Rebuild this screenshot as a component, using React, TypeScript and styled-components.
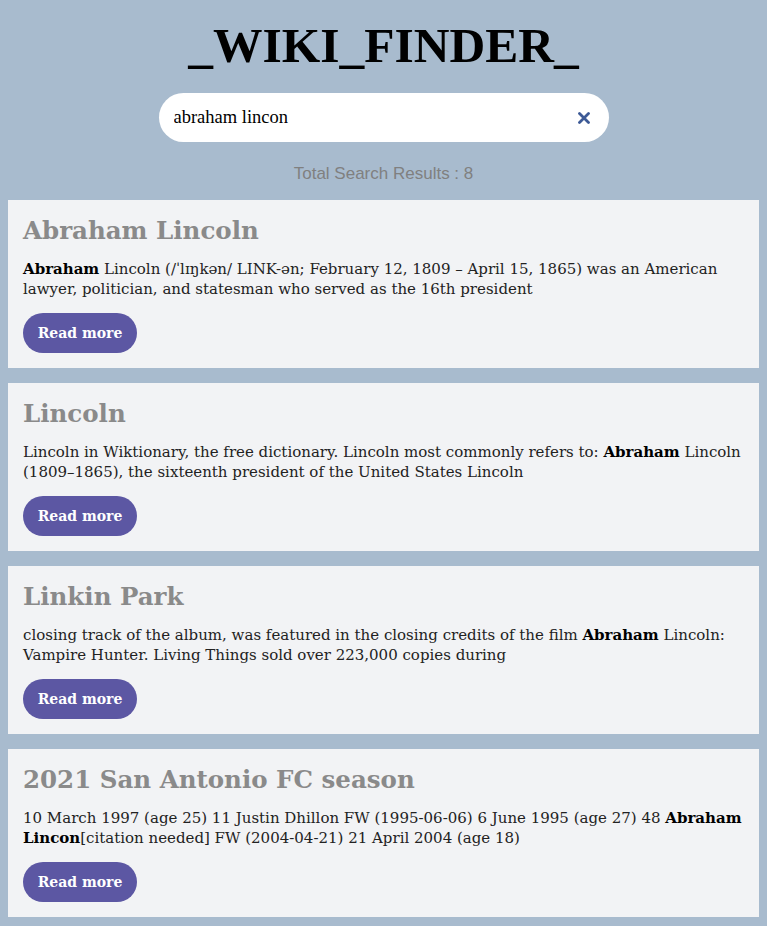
import React, { useEffect, useRef, useState } from "react";
import styled, { createGlobalStyle } from "styled-components";

const Global = createGlobalStyle`
  html, body { background: #a8bbce; }
  body { margin: 8px; font-family: "DejaVu Serif", Georgia, serif; }
`;

const Header = styled.header`
  display: flex;
  flex-direction: column;
  align-items: center;
`;

const Title = styled.h1`
  margin: 10px 0 0;
  font-family: "Liberation Serif", "Times New Roman", serif;
  font-weight: bold;
  font-size: 49.5px;
  line-height: 55px;
  color: #000;
`;

const SearchBox = styled.div`
  margin-top: 20px;
  width: 450px;
  height: 49px;
  background: #fff;
  border-radius: 25px;
  display: flex;
  align-items: center;
  padding: 0 18px 0 15px;
  box-sizing: border-box;
`;

const SearchInput = styled.input`
  flex: 1;
  border: none;
  outline: none;
  background: transparent;
  font-family: "Liberation Serif", "Times New Roman", serif;
  font-size: 18.5px;
  color: #000;
  padding: 0;
  caret-color: #000;
`;

const ClearButton = styled.button`
  border: none;
  background: transparent;
  padding: 0;
  width: 14px;
  height: 14px;
  display: flex;
  align-items: center;
  justify-content: center;
  cursor: pointer;
`;

const Count = styled.p`
  margin: 23px 0 0;
  font-family: "Liberation Sans", Arial, sans-serif;
  font-size: 17px;
  line-height: 18px;
  color: #808080;
`;

const Results = styled.main`
  margin-top: 17px;
  display: flex;
  flex-direction: column;
  gap: 15px;
`;

const Card = styled.article`
  background: #f2f3f5;
  padding: 15px;
  display: flex;
  flex-direction: column;
  align-items: flex-start;
`;

const CardTitle = styled.h2`
  margin: 0;
  font-family: "DejaVu Serif", Georgia, serif;
  font-size: 24.5px;
  line-height: 31px;
  font-weight: bold;
  color: #8a8a8a;
`;

const Snippet = styled.p`
  margin: 12px 0 0;
  padding-top: 1px;
  font-size: 15px;
  line-height: 20px;
  color: #222;
  b { color: #000; }
`;

const ReadMore = styled.a`
  margin-top: 14px;
  width: 114px;
  height: 40px;
  border-radius: 20px;
  background: #5c57a3;
  color: #fff;
  font-weight: bold;
  font-size: 14px;
  display: flex;
  align-items: center;
  justify-content: center;
  text-decoration: none;
`;

type Result = { title: string; snippet: React.ReactNode };

const results: Result[] = [
  {
    title: "Abraham Lincoln",
    snippet: (
      <>
        <b>Abraham</b> Lincoln (/ˈlɪŋkən/ LINK-ən; February 12, 1809 – April 15, 1865) was an American
        lawyer, politician, and statesman who served as the 16th president
      </>
    ),
  },
  {
    title: "Lincoln",
    snippet: (
      <>
        Lincoln in Wiktionary, the free dictionary. Lincoln most commonly refers to: <b>Abraham</b> Lincoln
        (1809–1865), the sixteenth president of the United States Lincoln
      </>
    ),
  },
  {
    title: "Linkin Park",
    snippet: (
      <>
        closing track of the album, was featured in the closing credits of the film <b>Abraham</b> Lincoln:
        Vampire Hunter. Living Things sold over 223,000 copies during
      </>
    ),
  },
  {
    title: "2021 San Antonio FC season",
    snippet: (
      <>
        10 March 1997 (age 25) 11 Justin Dhillon FW (1995-06-06) 6 June 1995 (age 27) 48 <b>Abraham</b>{" "}
        <b>Lincon</b>[citation needed] FW (2004-04-21) 21 April 2004 (age 18)
      </>
    ),
  },
];

export default function App() {
  const [query, setQuery] = useState("abraham lincon");
  const ref = useRef<HTMLInputElement>(null);
  useEffect(() => {
    const el = ref.current;
    if (el) {
      el.focus();
      el.setSelectionRange(el.value.length, el.value.length);
    }
  }, []);
  return (
    <>
      <Global />
      <Header>
        <Title>_WIKI_FINDER_</Title>
        <SearchBox>
          <SearchInput ref={ref} value={query} onChange={(e) => setQuery(e.target.value)} />
          <ClearButton aria-label="clear" onClick={() => setQuery("")}>
            <svg width="12" height="12" viewBox="0 0 12 12">
              <path d="M1.5 1.5 L10.5 10.5 M10.5 1.5 L1.5 10.5" stroke="#3d5a96" strokeWidth="2.8" strokeLinecap="round" />
            </svg>
          </ClearButton>
        </SearchBox>
        <Count>Total Search Results : 8</Count>
      </Header>
      <Results>
        {results.map((r) => (
          <Card key={r.title}>
            <CardTitle>{r.title}</CardTitle>
            <Snippet>{r.snippet}</Snippet>
            <ReadMore href="#">Read more</ReadMore>
          </Card>
        ))}
      </Results>
    </>
  );
}
